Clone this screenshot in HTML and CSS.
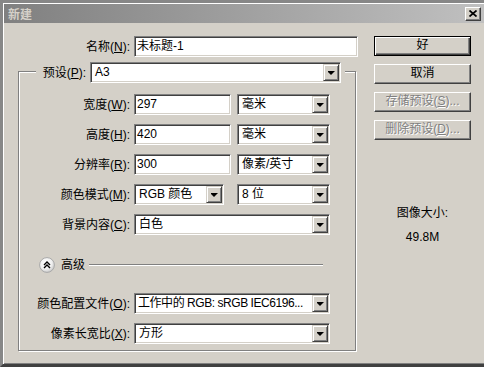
FILE: index.html
```html
<!DOCTYPE html>
<html lang="zh-CN">
<head>
<meta charset="utf-8">
<title>新建</title>
<link rel="stylesheet" href="styles.css">
</head>
<body>
<div class="window">
  <div class="titlebar">
    <span class="title">新建</span>
    <span class="close"><svg width="8" height="7" viewBox="0 0 8 7"><path d="M0.5 0.5 L7.5 6.5 M7.5 0.5 L0.5 6.5" stroke="#000" stroke-width="1.7" fill="none"/></svg></span>
  </div>
  <div class="body">
    <div class="main">
      <div class="row name-row">
        <span class="lbl">名称(<u>N</u>):</span>
        <div class="field w224">未标题-1</div>
      </div>
      <div class="group">
        <div class="group-head">
          <span class="lbl head-lbl">预设(<u>P</u>):</span>
          <div class="select w251"><span class="val">A3</span><span class="arrow"></span></div>
        </div>
        <div class="fields">
          <div class="row">
            <span class="lbl">宽度(<u>W</u>):</span>
            <div class="field w97">297</div>
            <div class="select unit"><span class="val">毫米</span><span class="arrow"></span></div>
          </div>
          <div class="row">
            <span class="lbl">高度(<u>H</u>):</span>
            <div class="field w97">420</div>
            <div class="select unit"><span class="val">毫米</span><span class="arrow"></span></div>
          </div>
          <div class="row">
            <span class="lbl">分辨率(<u>R</u>):</span>
            <div class="field w97">300</div>
            <div class="select unit"><span class="val">像素/英寸</span><span class="arrow"></span></div>
          </div>
          <div class="row">
            <span class="lbl">颜色模式(<u>M</u>):</span>
            <div class="select w90"><span class="val">RGB 颜色</span><span class="arrow"></span></div>
            <div class="select unit unit-wide"><span class="val">8 位</span><span class="arrow"></span></div>
          </div>
          <div class="row">
            <span class="lbl">背景内容(<u>C</u>):</span>
            <div class="select w196"><span class="val">白色</span><span class="arrow"></span></div>
          </div>
          <div class="adv">
            <svg class="chev" width="16" height="16" viewBox="0 0 16 16">
              <defs>
                <radialGradient id="g" cx="0.4" cy="0.35" r="0.7">
                  <stop offset="0" stop-color="#ffffff"/>
                  <stop offset="0.6" stop-color="#f0f0f0"/>
                  <stop offset="1" stop-color="#c4c4c4"/>
                </radialGradient>
              </defs>
              <circle cx="8" cy="8" r="7.4" fill="url(#g)" stroke="#a8a8a8" stroke-width="1"/>
              <path d="M5 8 L8 5 L11 8 M5 11 L8 8 L11 11" stroke="#000" stroke-width="1.4" fill="none"/>
            </svg>
            <span class="adv-text">高级</span>
            <span class="adv-line"></span>
          </div>
          <div class="row">
            <span class="lbl">颜色配置文件(<u>O</u>):</span>
            <div class="select w196"><span class="val tight">工作中的 RGB: sRGB IEC6196...</span><span class="arrow"></span></div>
          </div>
          <div class="row">
            <span class="lbl">像素长宽比(<u>X</u>):</span>
            <div class="select w196"><span class="val">方形</span><span class="arrow"></span></div>
          </div>
        </div>
      </div>
    </div>
    <div class="side">
      <div class="btn default">好</div>
      <div class="btn">取消</div>
      <div class="btn disabled">存储预设(<u>S</u>)...</div>
      <div class="btn disabled">删除预设(<u>D</u>)...</div>
      <div class="imgsize">
        <div>图像大小:</div>
        <div class="size-val">49.8M</div>
      </div>
    </div>
  </div>
</div>
</body>
</html>
```
FILE: styles.css
```css
* {
  box-sizing: border-box;
  margin: 0;
  padding: 0;
}

html, body {
  width: 484px;
  height: 367px;
  overflow: hidden;
  background: #d4d0c8;
}

body {
  font-family: "Liberation Sans", "Noto Sans CJK SC", sans-serif;
  font-size: 12px;
  line-height: 14px;
  color: #000;
}

u {
  text-decoration: underline;
  text-underline-offset: 1px;
}

.window {
  width: 484px;
  height: 367px;
  border-top: 3px solid #878787;
  border-left: 3px solid #878787;
  border-bottom: 3px solid #404040;
  padding: 1px 0 0 1px;
  box-shadow: inset 1px 1px 0 #ffffff, inset 0 -1px 0 #808080;
  display: flex;
  flex-direction: column;
}

.titlebar {
  height: 19px;
  background: linear-gradient(to right, #808080, #c0c0c0);
  display: flex;
  align-items: center;
  justify-content: space-between;
  padding: 0 3px 0 4px;
}

.title {
  color: #d4d0c8;
  font-weight: bold;
  font-family: "Noto Sans CJK SC", sans-serif;
  line-height: 14px;
}

.close {
  width: 16px;
  height: 14px;
  background: #d4d0c8;
  border: 1px solid;
  border-color: #ffffff #404040 #404040 #ffffff;
  box-shadow: inset -1px -1px 0 #808080;
  display: flex;
  align-items: center;
  justify-content: center;
}

.body {
  display: flex;
  padding-top: 13px;
}

.main {
  width: 354px;
}

.row {
  display: flex;
  align-items: center;
  gap: 4px;
  height: 21px;
}

.lbl {
  text-align: right;
  white-space: nowrap;
}

.name-row .lbl {
  width: 126px;
}

.field,
.select {
  height: 21px;
  background: #ffffff;
  border: 1px solid;
  border-color: #808080 #ffffff #ffffff #808080;
  box-shadow: inset 1px 1px 0 #404040, inset -1px -1px 0 #d4d0c8;
  line-height: 19px;
  white-space: nowrap;
}

.field {
  padding-left: 2px;
}

.select {
  display: flex;
  align-items: stretch;
}

.select .val {
  flex: 1;
  min-width: 0;
  overflow: hidden;
  padding-left: 4px;
}

.select .val.tight {
  letter-spacing: -0.45px;
  padding-left: 3px;
}

.arrow {
  flex: none;
  width: 16px;
  height: 17px;
  margin: 1px;
  background: #d4d0c8;
  border: 1px solid;
  border-color: #d4d0c8 #404040 #404040 #d4d0c8;
  box-shadow: inset 1px 1px 0 #ffffff, inset -1px -1px 0 #808080;
  display: flex;
  align-items: center;
  justify-content: center;
}

.arrow::after {
  content: "";
  width: 7px;
  height: 4px;
  background: #000;
  clip-path: polygon(0 0, 7px 0, 7px 1px, 6px 1px, 6px 2px, 5px 2px, 5px 3px, 4px 3px, 4px 4px, 3px 4px, 3px 3px, 2px 3px, 2px 2px, 1px 2px, 1px 1px, 0 1px);
  margin-top: 1px;
}

.w224 { width: 224px; }
.w251 { width: 251px; }
.w97 { width: 97px; }
.w90 { width: 90px; }
.w196 { width: 196px; }

.unit {
  width: 93px;
  margin-left: 2px;
}

.unit-wide {
  margin-left: 9px;
}

.group {
  margin: 14px 0 0 14px;
  width: 338px;
  border: 1px solid #808080;
  box-shadow: inset 1px 1px 0 #ffffff, 1px 1px 0 #ffffff;
  padding-bottom: 6px;
}

.group-head {
  display: flex;
  align-items: center;
  gap: 4px;
  width: 309px;
  height: 21px;
  margin: -10px 0 0 17px;
  padding: 0 4px;
  background: #d4d0c8;
}

.head-lbl {
  width: 46px;
}

.fields {
  padding-top: 11px;
}

.fields .lbl {
  width: 111px;
}

.row + .row {
  margin-top: 9px;
}

.adv {
  display: flex;
  align-items: center;
  height: 16px;
  margin-top: 22px;
  padding-left: 20px;
  margin-right: 32px;
}

.chev {
  flex: none;
  display: block;
}

.adv-text {
  margin-left: 6px;
}

.adv-line {
  flex: 1;
  height: 2px;
  margin-left: 4px;
  border-top: 1px solid #808080;
  border-bottom: 1px solid #ffffff;
}

.adv + .row {
  margin-top: 20px;
}

.side {
  margin-left: 16px;
  width: 97px;
  display: flex;
  flex-direction: column;
  gap: 8px;
}

.btn {
  height: 20px;
  background: #d4d0c8;
  border: 1px solid;
  border-color: #ffffff #404040 #404040 #ffffff;
  box-shadow: inset -1px -1px 0 #808080;
  text-align: center;
  line-height: 17px;
  white-space: nowrap;
}

.btn.default {
  border: 1px solid #000;
  box-shadow: inset 1px 1px 0 #ffffff, inset -1px -1px 0 #404040, inset -2px -2px 0 #808080;
}

.btn.disabled {
  color: #808080;
  text-shadow: 1px 1px 0 #ffffff;
}

.imgsize {
  margin-top: 58px;
  text-align: center;
  line-height: 14px;
}

.size-val {
  margin-top: 10px;
}
```
